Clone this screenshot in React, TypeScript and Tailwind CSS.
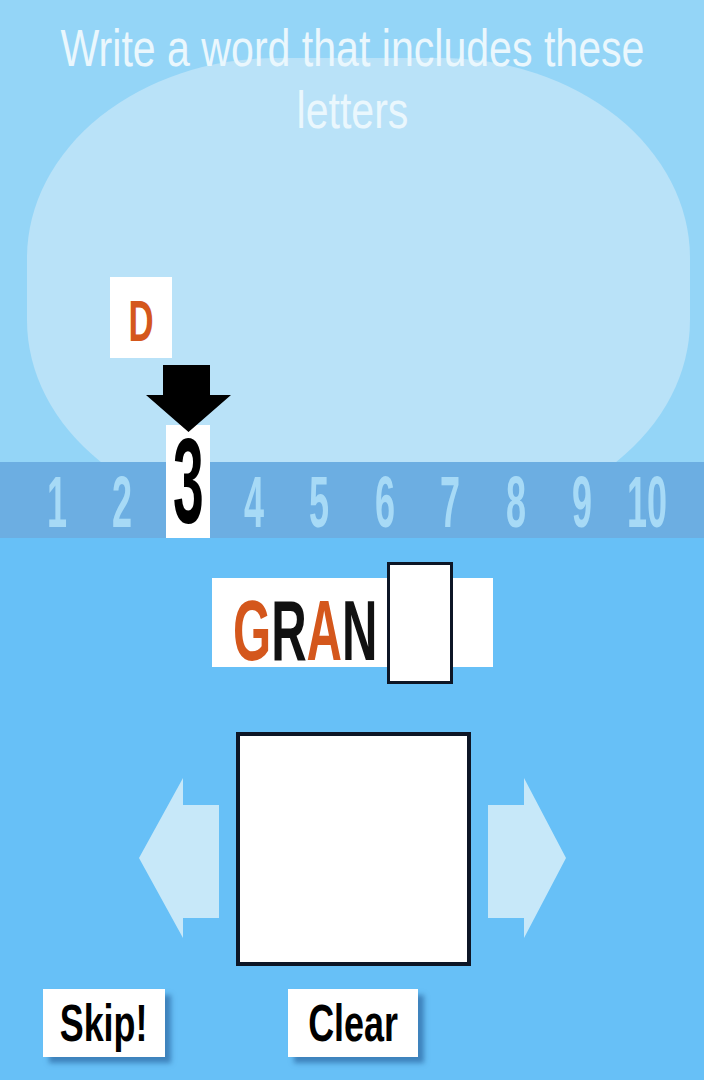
const NUMBERS = ["1", "2", "3", "4", "5", "6", "7", "8", "9", "10"];

function LeftArrow() {
  return (
    <svg width="80" height="160" viewBox="0 0 80 160" className="mt-[46px]">
      <polygon points="0,80 44,0 44,27 80,27 80,140 44,140 44,160" fill="#c7e8f9" />
    </svg>
  );
}

function RightArrow() {
  return (
    <svg width="78" height="160" viewBox="0 0 78 160" className="mt-[46px]">
      <polygon points="78,80 36,0 36,27 0,27 0,140 36,140 36,160" fill="#c7e8f9" />
    </svg>
  );
}

export default function App() {
  return (
    <div className="w-[704px] h-[1080px] overflow-hidden font-['Liberation_Sans',sans-serif]">
      {/* top screen */}
      <div className="relative h-[538px] bg-[#94d5f7] flex flex-col">
        <div className="absolute left-[27px] top-[58px] w-[663px] h-[462px] rounded-[250px/200px] bg-[#b9e2f8]" />

        <div className="relative self-center w-max pt-[17px] text-center text-[52px] leading-[62px] text-[#eaf7fd] whitespace-nowrap scale-x-[0.79]">
          Write a word that includes these
          <br />
          letters
        </div>

        <div className="relative ml-[110px] mt-[136px] w-[62px] h-[81px] bg-white flex items-center justify-center">
          <span className="text-[58px] leading-[58px] font-bold text-[#d4571c] scale-x-[0.6] mt-[6px]">D</span>
        </div>

        <svg width="85" height="67" viewBox="0 0 85 67" className="relative z-10 ml-[146px] mt-[7px]">
          <polygon points="17,0 64,0 64,30 85,30 42.5,67 0,30 17,30" fill="#000" />
        </svg>

        <div className="relative mt-[-7px] h-[113px] px-[24px] grid grid-cols-10 bg-[linear-gradient(to_bottom,transparent_37px,#6caee2_37px)]">
          {NUMBERS.map((n) =>
            n === "3" ? (
              <div key={n} className="flex justify-center">
                <div className="w-[44px] h-full bg-white flex items-end justify-center pb-[7px]">
                  <span className="text-[120px] leading-[100px] font-bold text-black scale-x-[0.46]">3</span>
                </div>
              </div>
            ) : (
              <div key={n} className="flex items-end justify-center">
                <span className="text-[72px] leading-[72px] font-bold text-[#a7daf6] scale-x-[0.5] whitespace-nowrap">
                  {n}
                </span>
              </div>
            )
          )}
        </div>
      </div>

      {/* bottom screen */}
      <div className="h-[542px] bg-[#67c0f7] flex flex-col">
        <div className="mx-auto mt-[40px] w-[281px] h-[89px] bg-white flex items-center pl-[21px]">
          <div className="self-start mt-[9px] w-[145px] text-[86px] leading-[86px] font-bold whitespace-nowrap">
            <span className="inline-block origin-left scale-x-[0.57]">
              <span className="text-[#d4571c]">G</span>
              <span className="text-[#111]">R</span>
              <span className="text-[#d4571c]">A</span>
              <span className="text-[#111]">N</span>
            </span>
          </div>
          <div className="ml-[9px] w-[66px] h-[122px] shrink-0 bg-white border-[3px] border-[#0d1626]" />
        </div>

        <div className="mt-[65px] flex justify-center items-start gap-[17px]">
          <LeftArrow />
          <div className="w-[235px] h-[234px] bg-white border-[4px] border-[#0d1626]" />
          <RightArrow />
        </div>

        <div className="mt-[23px] flex">
          <div className="ml-[43px] w-[122px] h-[68px] bg-white flex items-center justify-center shadow-[6px_6px_5px_rgba(30,80,140,0.55)]">
            <span className="text-[52px] leading-[52px] font-bold text-black scale-x-[0.69]">Skip!</span>
          </div>
          <div className="ml-[123px] w-[130px] h-[68px] bg-white flex items-center justify-center shadow-[6px_6px_5px_rgba(30,80,140,0.55)]">
            <span className="text-[52px] leading-[52px] font-bold text-black scale-x-[0.69]">Clear</span>
          </div>
        </div>
      </div>
    </div>
  );
}
